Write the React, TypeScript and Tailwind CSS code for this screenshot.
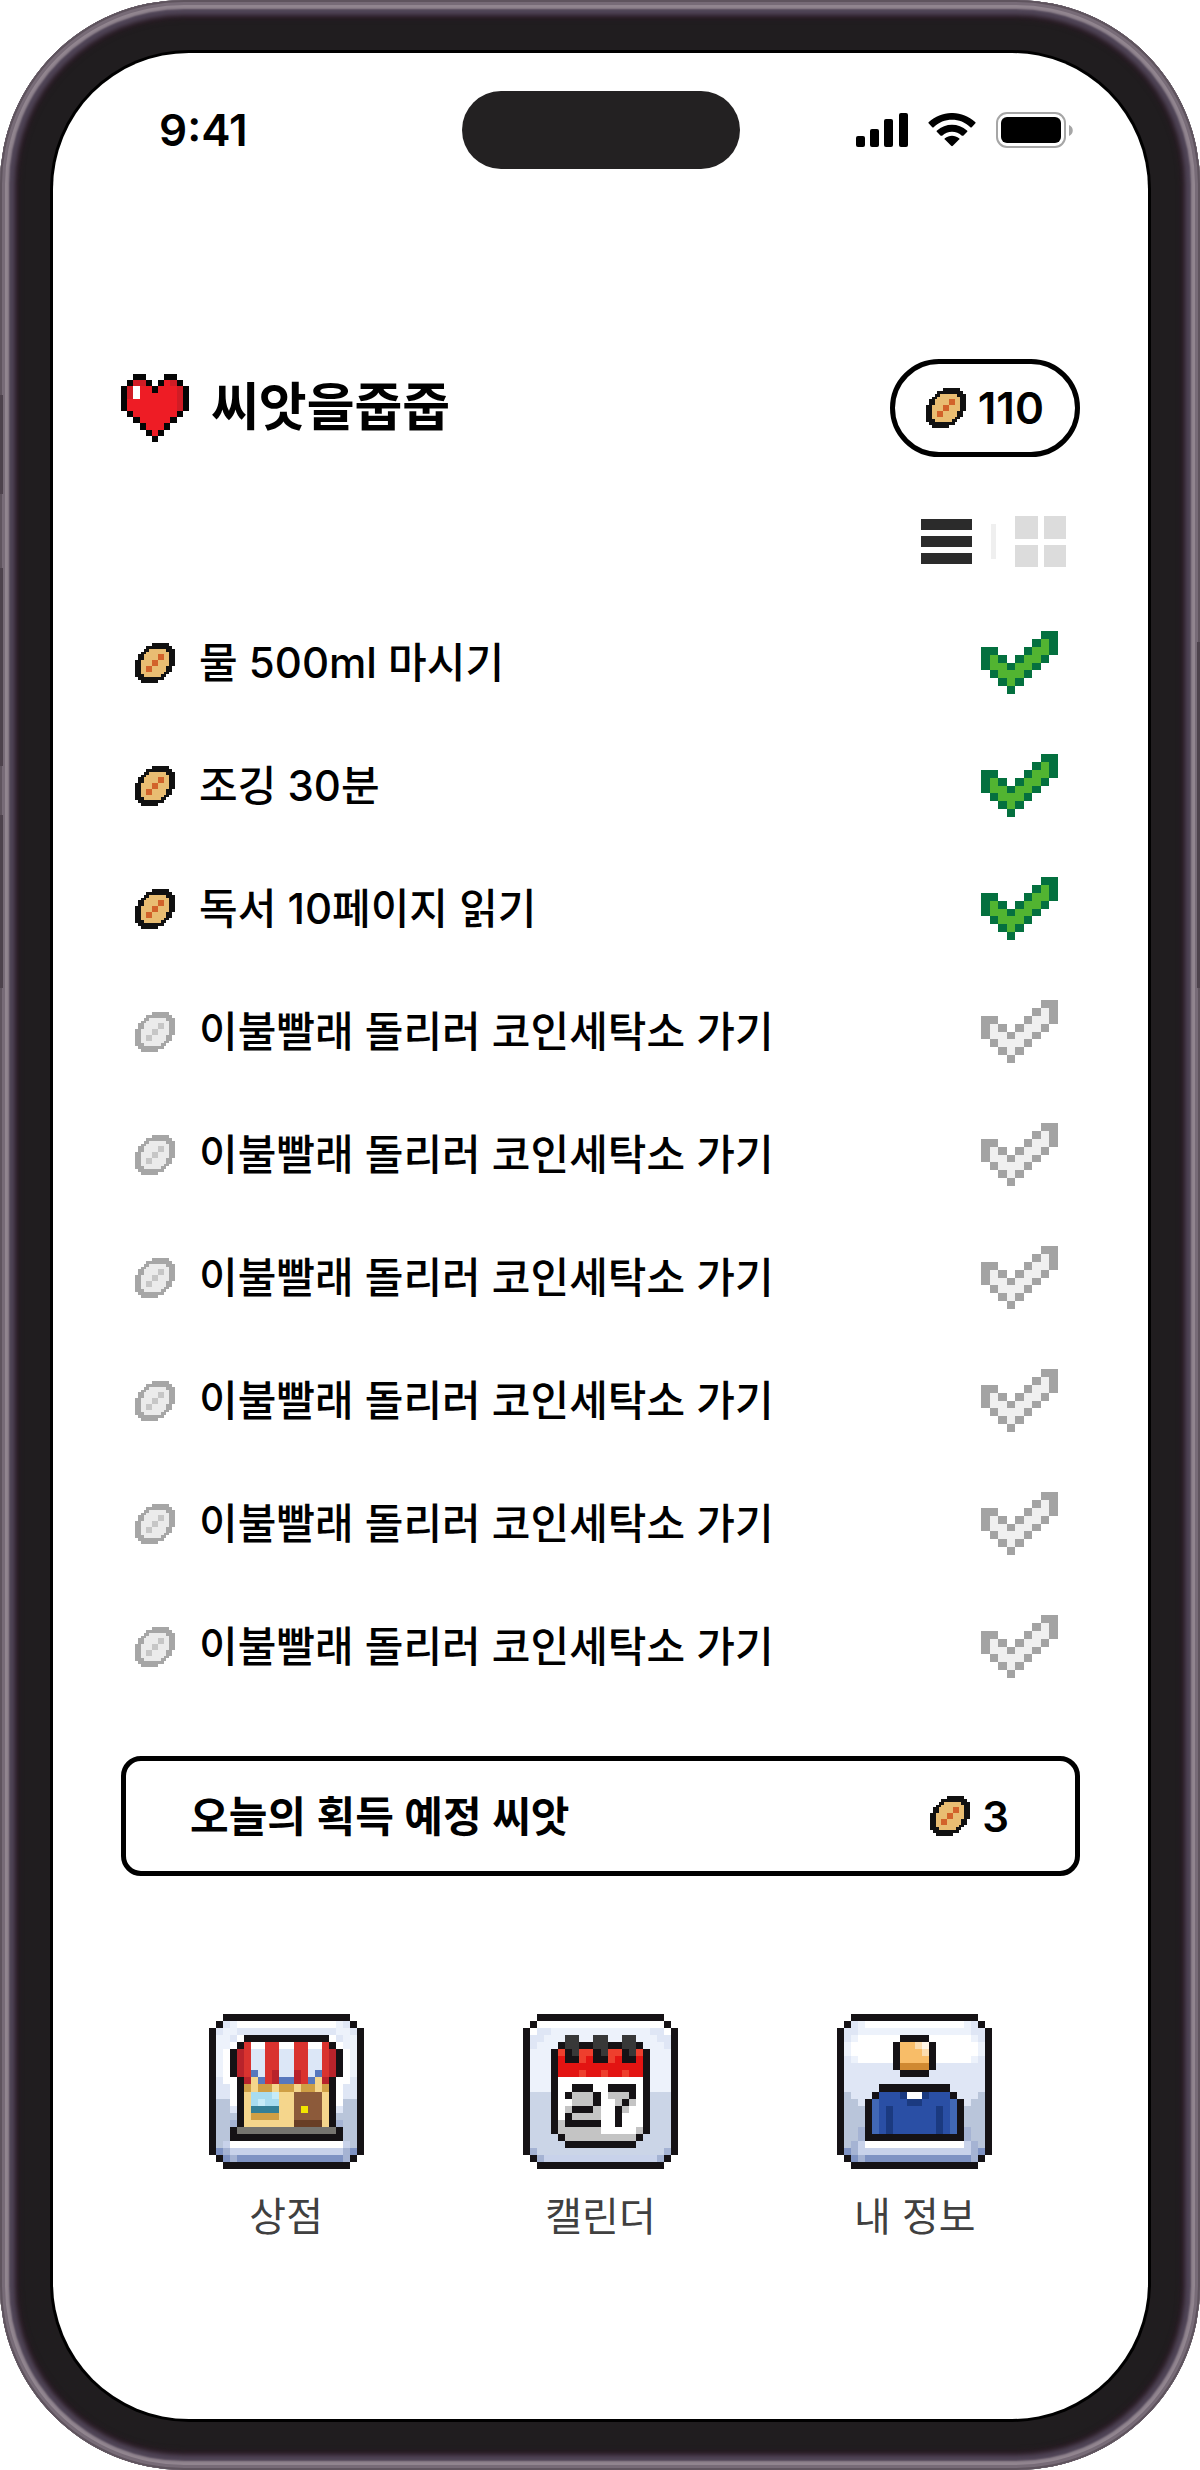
import React from "react";

type Palette = Record<string, string>;

function PixelArt({ rows, palette, className }: { rows: string[]; palette: Palette; className: string }) {
  const width = rows[0].length;
  const cells: React.ReactNode[] = [];
  rows.forEach((row, y) => {
    let x = 0;
    while (x < width) {
      const key = row[x];
      let end = x + 1;
      while (end < width && row[end] === key) end++;
      if (palette[key]) {
        cells.push(<rect key={`${x}-${y}`} x={x} y={y} width={end - x} height={1} fill={palette[key]} />);
      }
      x = end;
    }
  });
  return (
    <svg
      viewBox={`0 0 ${width} ${rows.length}`}
      preserveAspectRatio="none"
      shapeRendering="crispEdges"
      className={className}
      aria-hidden="true"
    >
      {cells}
    </svg>
  );
}

const HEART = [
  "..KK...KK..",
  ".KddK.KrdK.",
  "KdwrrKrrrdK",
  "KdwrrrrrrdK",
  "KrrrrrrrrdK",
  "KrrrrrrrrdK",
  ".KrrrrrrrK.",
  "..KrrrrrK..",
  "...KrrrK...",
  "....KrK....",
  ".....K.....",
];
const HEART_COLORS: Palette = { K: "#050505", r: "#ee1c25", d: "#d01c25", w: "#ffffff" };

const SEED = [
  "......KKKKKK..",
  "....KKKKKKKKK.",
  "...KKssssssKKK",
  "..KKssssssssKK",
  ".KKsssssrrssKK",
  ".KKsssssrrssKK",
  "KKssssrrssssKK",
  "KKssssrrssssKK",
  "KKssrrsssssKK.",
  "KKssrrsssssKK.",
  "KKssssssssKK..",
  "KKKssssssKK...",
  ".KKKKKKKKK....",
  "..KKKKKK......",
];
const SEED_COLORS: Palette = { K: "#111111", s: "#e9bd72", r: "#d2622a" };
const SEED_MUTED: Palette = { K: "#a6a6a6", s: "#ebebeb", r: "#c6c6c6" };

const CHECK = [
  ".......DD",
  "......DGD",
  "DD...DGGD",
  "DGD.DGGD.",
  "DGGDGGD..",
  ".DGGGD...",
  "..DGD....",
  "...D.....",
];
const CHECK_COLORS: Palette = { D: "#04703f", G: "#52b431" };
const CHECK_MUTED: Palette = { D: "#a3a3a3", G: "#f0f0f0" };

const TILE_COLORS: Palette = {
  K: "#151215",
  w: "#ffffff",
  a: "#edf2fb",
  b: "#dfe6f5",
  c: "#b9c5da",
  e: "#c8d2ea",
  f: "#7f93c3",
  g: "#a5b3d3",
  h: "#cbd5e7",
};

const SHOP = [
  "..KKKKKKKKKKKKKKKKKK..",
  ".KbawwwwwwwwwwwwwwabK.",
  "KbaabbbbbbbbbbbbbbaabK",
  "KaabwKKKKKKKKKKKKwbaaK",
  "KaawKrwwrrwwrrwwrKwaaK",
  "KawKRrllrrllrrllrRKwaK",
  "KawKRrllrrllrrllrRKwaK",
  "KawKRrllrrllrrllrRKwaK",
  "KawKRrulrRllRrlurRKwaK",
  "KbwwKRyurRuuRruyRKwwbK",
  "KbbwKoyooyooyooyoKwbbK",
  "KbbwKysssSyyddddyKwbbK",
  "KccwKysSssyyddddyKwccK",
  "KccbKyttttyydYddyKbccK",
  "KcccKyooooyyddddyKcccK",
  "KccgKyyyyyyyDDDDyKgccK",
  "KccKmmmmmmmmmmmmmmKccK",
  "KccKKKKKKKKKKKKKKKKccK",
  "KcewwwwwwwwwwwwwwwwecK",
  "KfgeeeeeeeeeeeeeeeegfK",
  ".KfgfffffffffffffffgK.",
  "..KKKKKKKKKKKKKKKKKK..",
];
const SHOP_COLORS: Palette = {
  ...TILE_COLORS,
  r: "#d9332f",
  R: "#b8232b",
  l: "#dce7f7",
  u: "#5878bd",
  y: "#f5d68c",
  o: "#cf9f45",
  s: "#a8dcf0",
  S: "#c6ebf8",
  t: "#347f96",
  d: "#8c5a3a",
  D: "#683e25",
  Y: "#f2e500",
  m: "#75746f",
};

const CALENDAR = [
  "..KKKKKKKKKKKKKKKKKK..",
  ".KwwwwwwwwwwwwwwwwwwK.",
  "KwbbaaaaaaaaaaaaaabbwK",
  "KbbaaaGGaaGGaaGGaaabbK",
  "KbaaaKGGKKGGKKGGKaaabK",
  "KaaaKqKGqqKGqqKGqKaaaK",
  "KaaaKrKKqrKKqrKKrKaaaK",
  "KaaaKrrrrrrrrrrrrKaaaK",
  "KaaaKrrrqrrqrrqrrKaaaK",
  "KaaaKwwwwwwwwwwwwKaaaK",
  "KaaaKwwKKKwwKKKKwKaaaK",
  "KhhhKwKmmmKwmmmKwKhhhK",
  "KhhhKwwmmmKwwmKmwKhhhK",
  "KhhhKwmKKKmwwKmwwKhhhK",
  "KhhhKwKmmmmwwKwwwKhhhK",
  "KhhhKmKKKKKwwKwwwKhhhK",
  "KhhhKmmmmmmwwwwwmKhhhK",
  "KhhhhKmmmmmmmmmmKhhhhK",
  "KhhhhhKKKKKKKKKKhhhhhK",
  "KghhhhhhhhhhhhhhhhhhgK",
  ".KgeeeeeeeeeeeeeeeegK.",
  "..KKKKKKKKKKKKKKKKKK..",
];
const CALENDAR_COLORS: Palette = {
  ...TILE_COLORS,
  r: "#e31412",
  q: "#ee3f2d",
  G: "#383838",
  m: "#c4c4c4",
};

const PROFILE = [
  "..KKKKKKKKKKKKKKKKKK..",
  ".KbawwwwwwwwwwwwwwabK.",
  "KbbaaaaaaaaaaaaaaaabbK",
  "KbawwwwwwKKKKwwwwwwabK",
  "KawwwwwwKooplKwwwwwwaK",
  "KawwwwwwKoooPKwwwwwwaK",
  "KbawwwwwKooooKwwwwwabK",
  "KbbbbbbbKOOOOKbbbbbbbK",
  "KbbbbbbbbKKKKbbbbbbbbK",
  "KbbbbbbbbbbbbbbbbbbbbK",
  "KbbbbbKKKKKKKKKKbbbbbK",
  "KcbbbKuuuNwwNuuuKbbbcK",
  "KccbKUuuuuNNuuuuUKbccK",
  "KcccKUuNuuuuuuNuUKcccK",
  "KcccKUuNuuuuuuNuUKcccK",
  "KcccKUuNuuuuuuNuUKcccK",
  "KccgKUuNuuuuuuNuUKgccK",
  "KccgKKKKKKKKKKKKKKgccK",
  "KcgewwwwwwwwwwwwwwegcK",
  "KfgeeeeeeeeeeeeeeeegfK",
  ".KfgfffffffffffffffgK.",
  "..KKKKKKKKKKKKKKKKKK..",
];
const PROFILE_COLORS: Palette = {
  ...TILE_COLORS,
  o: "#f8bd68",
  O: "#cf8931",
  p: "#fbdcae",
  P: "#fbdcae",
  l: "#fff6e6",
  u: "#2a4fa5",
  U: "#4168b5",
  N: "#1b3a80",
};

function Seed({ muted = false }: { muted?: boolean }) {
  return <PixelArt rows={SEED} palette={muted ? SEED_MUTED : SEED_COLORS} className="h-10 w-10 shrink-0" />;
}

const TASKS = [
  { title: "물 500ml 마시기", done: true },
  { title: "조깅 30분", done: true },
  { title: "독서 10페이지 읽기", done: true },
  ...Array.from({ length: 6 }, () => ({ title: "이불빨래 돌리러 코인세탁소 가기", done: false })),
];

const MENU = [
  { label: "상점", rows: SHOP, palette: SHOP_COLORS },
  { label: "캘린더", rows: CALENDAR, palette: CALENDAR_COLORS },
  { label: "내 정보", rows: PROFILE, palette: PROFILE_COLORS },
];

function StatusBar() {
  return (
    <div className="grid grid-cols-[1fr_auto_1fr] items-center pt-[38px]">
      <div className="pl-[106px] text-[44px] leading-[52px] font-semibold">9:41</div>
      <div className="h-[78px] w-[278px] rounded-full bg-[#232122]" />
      <div className="flex items-center justify-end gap-5 pr-[74px]">
        <svg viewBox="0 0 52 34" className="h-[34px] w-[52px]" aria-hidden="true">
          <rect x="0" y="23" width="9" height="11" rx="2" />
          <rect x="14" y="16" width="9" height="18" rx="2" />
          <rect x="28" y="6" width="9" height="28" rx="2" />
          <rect x="43" y="0" width="9" height="34" rx="2" />
        </svg>
        <svg viewBox="0 0 17 12" className="h-[34px] w-12" aria-hidden="true">
          <path d="M8.5 2.4c2.4 0 4.7.9 6.5 2.6.1.1.3.1.5 0l1.2-1.3c.2-.1.2-.4 0-.5C12.100-1.100 4.900-1.100.300 3.200c-.2.1-.2.4 0 .5L1.500 5c.2.1.4.1.5 0C3.800 3.300 6.100 2.400 8.500 2.400zm0 4.200c1.300 0 2.600.5 3.500 1.400.2.1.4.1.5 0l1.300-1.300c.2-.2.2-.4 0-.5-3-2.800-7.600-2.800-10.600 0-.2.1-.2.4 0 .5L4.500 8c.1.1.4.1.5 0 1-.9 2.200-1.400 3.500-1.400zm2.500 2.800c.2-.1.2-.4 0-.5-1.400-1.200-3.600-1.200-5 0-.2.1-.2.4 0 .5l2.200 2.200c.2.2.4.2.6 0L11 9.400z" />
        </svg>
        <svg viewBox="0 0 78 36" className="h-9 w-[78px]" aria-hidden="true">
          <rect x="1" y="1" width="68" height="34" rx="10" fill="none" stroke="#a6a6a6" strokeWidth="2" />
          <rect x="5" y="5" width="60" height="26" rx="6" />
          <path d="M73 13c5 2 5 9 0 11z" fill="#a6a6a6" />
        </svg>
      </div>
    </div>
  );
}

export default function App() {
  return (
    <div
      className="relative flex min-h-screen w-full bg-white font-['Inter','Noto_Sans_CJK_KR',sans-serif] text-black"
      lang="ko"
    >
      <div className="flex w-full rounded-[184px] bg-[#201d1f] pt-[53px] pr-[52px] pb-[51px] pl-[53px] shadow-[inset_0_0_0_2px_#5f545e,inset_0_0_0_5px_#776b77,inset_0_0_2px_9px_#91858f,inset_0_0_4px_15px_#504557,inset_0_0_5px_19px_#2a1c25]">
        <main className="flex w-full flex-col rounded-[136px] bg-white shadow-[0_0_0_3px_#000]">
          <StatusBar />
          <div className="flex flex-col px-[68px] pt-[190px]">
            <header className="flex items-center justify-between">
              <div className="flex items-center gap-[22px]">
                <PixelArt rows={HEART} palette={HEART_COLORS} className="h-[68px] w-[68px]" />
                <h1 className="text-[52px] leading-[64px] font-bold">씨앗을줍줍</h1>
              </div>
              <div className="flex h-[98px] items-center gap-3 rounded-full border-[5px] border-black px-[31px] text-[44px] font-semibold">
                <Seed />
                110
              </div>
            </header>

            <div className="mt-[59px] flex items-center justify-end gap-[19px] pr-3.5">
              <button type="button" aria-label="목록 보기" className="flex w-[51px] flex-col gap-1.5">
                <span className="h-[11px] w-full bg-[#2b2b2b]" />
                <span className="h-[11px] w-full bg-[#2b2b2b]" />
                <span className="h-[11px] w-full bg-[#2b2b2b]" />
              </button>
              <span className="h-[35px] w-[5px] bg-[#efefef]" />
              <button type="button" aria-label="격자 보기" className="grid h-[51px] w-[51px] grid-cols-2 gap-1.5">
                <span className="bg-[#dcdcdc]" />
                <span className="bg-[#dcdcdc]" />
                <span className="bg-[#dcdcdc]" />
                <span className="bg-[#dcdcdc]" />
              </button>
            </div>

            <ul className="mt-[34px] pr-[22px] pl-3.5">
              {TASKS.map((task, i) => (
                <li key={i} className="flex h-[123px] items-center">
                  <Seed muted={!task.done} />
                  <span className="ml-6 flex-1 text-[42px] font-medium">{task.title}</span>
                  <button type="button" aria-label={`${task.title} 완료`} aria-pressed={task.done}>
                    <PixelArt
                      rows={CHECK}
                      palette={task.done ? CHECK_COLORS : CHECK_MUTED}
                      className="h-[63px] w-[77px]"
                    />
                  </button>
                </li>
              ))}
            </ul>

            <section className="mt-12 flex h-[120px] items-center justify-between rounded-[20px] border-[5px] border-black pr-[66px] pl-16 text-[42px] font-semibold">
              <span>오늘의 획득 예정 씨앗</span>
              <span className="flex items-center gap-3">
                <Seed />3
              </span>
            </section>

            <nav className="mt-[138px] grid grid-cols-3 px-2 pb-16">
              {MENU.map((item) => (
                <a key={item.label} href="#" className="flex flex-col items-center gap-5">
                  <PixelArt rows={item.rows} palette={item.palette} className="h-[155px] w-[155px]" />
                  <span className="text-[40px] leading-[56px] text-[#404040]">{item.label}</span>
                </a>
              ))}
            </nav>
          </div>
        </main>
      </div>

      {/* Hardware buttons along the edges of the phone */}
      <div className="absolute top-[16%] left-0 h-[4%] w-[3px] bg-[#4d424c]" />
      <div className="absolute top-[23%] left-0 h-[8%] w-[3px] bg-[#4d424c]" />
      <div className="absolute top-[33%] left-0 h-[7%] w-[3px] bg-[#4d424c]" />
      <div className="absolute top-[26%] right-0 h-[14%] w-[3px] bg-[#4d424c]" />
    </div>
  );
}
